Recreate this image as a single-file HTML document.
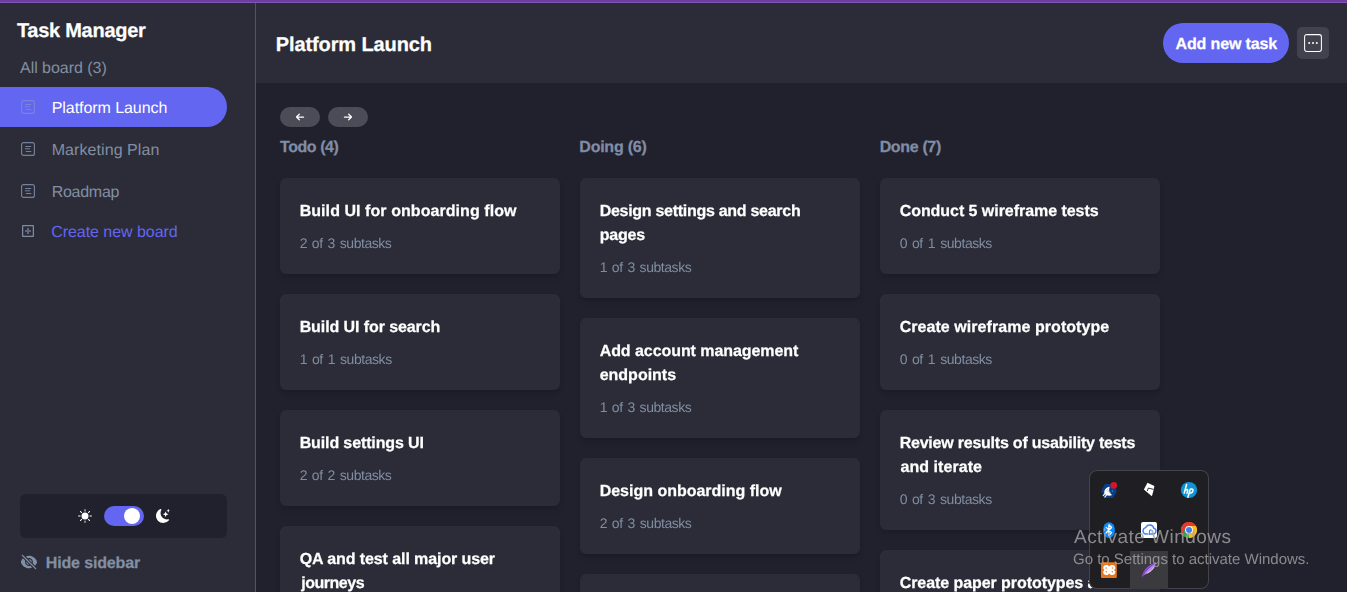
<!DOCTYPE html>
<html lang="en">
<head>
<meta charset="utf-8">
<title>Task Manager</title>
<style>
html,body{margin:0;padding:0;width:1347px;height:592px;overflow:hidden;background:#20212c}
#root{width:1347px;height:592px;overflow:hidden;position:relative;background:#20212c;font-family:"Liberation Sans",sans-serif}
.a{position:absolute}
.t{position:absolute;white-space:nowrap;line-height:1;text-rendering:geometricPrecision}
.card{position:absolute;width:280px;background:#2b2c37;border-radius:6px;box-shadow:0 4px 6px -1px rgba(0,0,0,.14),0 2px 4px -2px rgba(0,0,0,.14)}
.g{position:absolute;left:0;top:0;width:1347px;height:592px;will-change:transform}
svg{position:absolute;overflow:visible}
</style>
</head>
<body>
<div id="root">
<!-- top accent -->
<div class=a style="left:0;top:0;width:1347px;height:2px;background:#6b3fa0"></div>
<div class=a style="left:0;top:2px;width:1347px;height:1px;background:#8354b3"></div>
<!-- sidebar -->
<div class=a style="left:0;top:3px;width:255px;height:589px;background:#2b2c37"></div>
<div class=a style="left:255px;top:3px;width:1px;height:589px;background:#4b5567"></div>
<!-- header -->
<div class=a style="left:256px;top:3px;width:1091px;height:80px;background:#2b2c37"></div>
<!-- active pill -->
<div class=a style="left:0;top:87px;width:227px;height:40px;background:#6366f1;border-radius:0 20px 20px 0"></div>
<!-- theme box -->
<div class=a style="left:20px;top:494px;width:207px;height:44px;background:#20212c;border-radius:6px"></div>
<div class=a style="left:104px;top:506px;width:40px;height:20px;background:#6366f1;border-radius:10px"></div>
<div class=a style="left:124px;top:508px;width:16px;height:16px;background:#fff;border-radius:8px"></div>
<!-- add task button -->
<div class=a style="left:1163px;top:23px;width:126px;height:40px;background:#6366f1;border-radius:20px"></div>
<!-- dots button -->
<div class=a style="left:1297px;top:27px;width:32px;height:32px;background:#41424d;border-radius:5px"></div>
<!-- arrow buttons -->
<div class=a style="left:280px;top:107px;width:40px;height:20px;background:#4b4c57;border-radius:10px"></div>
<div class=a style="left:328px;top:107px;width:40px;height:20px;background:#4b4c57;border-radius:10px"></div>

<div class=card style="left:280px;top:178px;height:96px"></div>
<div class=card style="left:280px;top:294px;height:96px"></div>
<div class=card style="left:280px;top:410px;height:96px"></div>
<div class=card style="left:280px;top:526px;height:120px"></div>
<div class=card style="left:580px;top:178px;height:120px"></div>
<div class=card style="left:580px;top:318px;height:120px"></div>
<div class=card style="left:580px;top:458px;height:96px"></div>
<div class=card style="left:580px;top:574px;height:96px"></div>
<div class=card style="left:880px;top:178px;height:96px"></div>
<div class=card style="left:880px;top:294px;height:96px"></div>
<div class=card style="left:880px;top:410px;height:120px"></div>
<div class=card style="left:880px;top:550px;height:144px"></div>
<span class=t style="left:16.88px;top:21px;font-size:20px;font-weight:700;color:#ffffff;letter-spacing:-0.262px;word-spacing:0.000px;-webkit-text-stroke-width:.25px;">Task Manager</span>
<span class=t style="left:20.00px;top:61px;font-size:16px;font-weight:400;color:#828fa3;letter-spacing:-0.027px;word-spacing:0.000px;">All board (3)</span>
<span class=t style="left:51.70px;top:101px;font-size:16px;font-weight:400;color:#ffffff;letter-spacing:-0.057px;word-spacing:0.000px;">Platform Launch</span>
<span class=t style="left:51.70px;top:143px;font-size:16px;font-weight:400;color:#828fa3;letter-spacing:0.074px;word-spacing:0.000px;">Marketing Plan</span>
<span class=t style="left:51.70px;top:185px;font-size:16px;font-weight:400;color:#828fa3;letter-spacing:-0.267px;word-spacing:0.000px;">Roadmap</span>
<span class=t style="left:51.20px;top:225px;font-size:16px;font-weight:400;color:#6366f1;letter-spacing:-0.043px;word-spacing:0.000px;">Create new board</span>
<span class=t style="left:45.74px;top:556px;font-size:16px;font-weight:700;color:#828fa3;letter-spacing:-0.145px;word-spacing:0.000px;-webkit-text-stroke-width:.25px;">Hide sidebar</span>
<span class=t style="left:275.74px;top:35px;font-size:20px;font-weight:700;color:#ffffff;letter-spacing:-0.103px;word-spacing:0.000px;-webkit-text-stroke-width:.25px;">Platform Launch</span>
<span class=t style="left:1175.54px;top:37px;font-size:16px;font-weight:700;color:#ffffff;letter-spacing:-0.145px;word-spacing:0.000px;-webkit-text-stroke-width:.25px;">Add new task</span>
<span class=t style="left:280.00px;top:140px;font-size:16px;font-weight:700;color:#808da6;letter-spacing:-0.434px;word-spacing:0.000px;-webkit-text-stroke-width:.25px;">Todo (4)</span>
<span class=t style="left:579.32px;top:140px;font-size:16px;font-weight:700;color:#808da6;letter-spacing:-0.240px;word-spacing:0.000px;-webkit-text-stroke-width:.25px;">Doing (6)</span>
<span class=t style="left:879.66px;top:140px;font-size:16px;font-weight:700;color:#808da6;letter-spacing:-0.343px;word-spacing:0.000px;-webkit-text-stroke-width:.25px;">Done (7)</span>
<div class=g><span class=t style="left:299.66px;top:204px;font-size:16px;font-weight:700;color:#ffffff;letter-spacing:0.065px;word-spacing:0.000px;-webkit-text-stroke-width:.25px;">Build UI for onboarding flow</span>
<span class=t style="left:299.66px;top:236px;font-size:14px;font-weight:400;color:#808da1;letter-spacing:-0.450px;word-spacing:1.440px;">2 of 3 subtasks</span>
<span class=t style="left:299.66px;top:320px;font-size:16px;font-weight:700;color:#ffffff;letter-spacing:-0.089px;word-spacing:0.000px;-webkit-text-stroke-width:.25px;">Build UI for search</span>
<span class=t style="left:299.66px;top:352px;font-size:14px;font-weight:400;color:#808da1;letter-spacing:-0.450px;word-spacing:1.547px;">1 of 1 subtasks</span>
<span class=t style="left:299.66px;top:436px;font-size:16px;font-weight:700;color:#ffffff;letter-spacing:-0.120px;word-spacing:0.000px;-webkit-text-stroke-width:.25px;">Build settings UI</span>
<span class=t style="left:299.66px;top:468px;font-size:14px;font-weight:400;color:#808da1;letter-spacing:-0.450px;word-spacing:1.440px;">2 of 2 subtasks</span>
<span class=t style="left:299.66px;top:552px;font-size:16px;font-weight:700;color:#ffffff;letter-spacing:-0.090px;word-spacing:0.000px;-webkit-text-stroke-width:.25px;">QA and test all major user</span>
<span class=t style="left:301.26px;top:576px;font-size:16px;font-weight:700;color:#ffffff;letter-spacing:-0.480px;word-spacing:0.000px;-webkit-text-stroke-width:.25px;">journeys</span>
<span class=t style="left:599.66px;top:204px;font-size:16px;font-weight:700;color:#ffffff;letter-spacing:-0.282px;word-spacing:0.000px;-webkit-text-stroke-width:.25px;">Design settings and search</span>
<span class=t style="left:599.66px;top:228px;font-size:16px;font-weight:700;color:#ffffff;letter-spacing:-0.160px;word-spacing:0.000px;-webkit-text-stroke-width:.25px;">pages</span>
<span class=t style="left:599.66px;top:260px;font-size:14px;font-weight:400;color:#808da1;letter-spacing:-0.450px;word-spacing:1.387px;">1 of 3 subtasks</span>
<span class=t style="left:599.66px;top:344px;font-size:16px;font-weight:700;color:#ffffff;letter-spacing:-0.061px;word-spacing:0.000px;-webkit-text-stroke-width:.25px;">Add account management</span>
<span class=t style="left:599.66px;top:368px;font-size:16px;font-weight:700;color:#ffffff;letter-spacing:0.000px;word-spacing:0.000px;-webkit-text-stroke-width:.25px;">endpoints</span>
<span class=t style="left:599.66px;top:400px;font-size:14px;font-weight:400;color:#808da1;letter-spacing:-0.450px;word-spacing:1.387px;">1 of 3 subtasks</span>
<span class=t style="left:599.66px;top:484px;font-size:16px;font-weight:700;color:#ffffff;letter-spacing:-0.008px;word-spacing:0.000px;-webkit-text-stroke-width:.25px;">Design onboarding flow</span>
<span class=t style="left:599.66px;top:516px;font-size:14px;font-weight:400;color:#808da1;letter-spacing:-0.450px;word-spacing:1.440px;">2 of 3 subtasks</span>
<span class=t style="left:899.66px;top:204px;font-size:16px;font-weight:700;color:#ffffff;letter-spacing:-0.047px;word-spacing:0.000px;-webkit-text-stroke-width:.25px;">Conduct 5 wireframe tests</span>
<span class=t style="left:899.66px;top:236px;font-size:14px;font-weight:400;color:#808da1;letter-spacing:-0.450px;word-spacing:1.600px;">0 of 1 subtasks</span>
<span class=t style="left:899.66px;top:320px;font-size:16px;font-weight:700;color:#ffffff;letter-spacing:0.058px;word-spacing:0.000px;-webkit-text-stroke-width:.25px;">Create wireframe prototype</span>
<span class=t style="left:899.66px;top:352px;font-size:14px;font-weight:400;color:#808da1;letter-spacing:-0.450px;word-spacing:1.600px;">0 of 1 subtasks</span>
<span class=t style="left:899.66px;top:436px;font-size:16px;font-weight:700;color:#ffffff;letter-spacing:-0.220px;word-spacing:0.000px;-webkit-text-stroke-width:.25px;">Review results of usability tests</span>
<span class=t style="left:900.46px;top:460px;font-size:16px;font-weight:700;color:#ffffff;letter-spacing:0.064px;word-spacing:0.000px;-webkit-text-stroke-width:.25px;">and iterate</span>
<span class=t style="left:899.66px;top:492px;font-size:14px;font-weight:400;color:#808da1;letter-spacing:-0.450px;word-spacing:1.547px;">0 of 3 subtasks</span>
<span class=t style="left:899.66px;top:576px;font-size:16px;font-weight:700;color:#ffffff;letter-spacing:-0.065px;word-spacing:0.000px;-webkit-text-stroke-width:.25px;">Create paper prototypes</span>
<span class=t style="left:1087.40px;top:576px;font-size:16px;font-weight:700;color:#ffffff;letter-spacing:0.050px;word-spacing:0.000px;-webkit-text-stroke-width:.25px;">and</span></div>
<!-- board icons -->
<svg style="left:21px;top:100px" width="14" height="14" viewBox="0 0 14 14" fill="none" stroke="#7d81dc" stroke-width="1.150"><rect x=".6" y=".6" width="12.8" height="12.8" rx="2"/><path d="M4.2 4.5h6M3.8 6.800h5.3M4.8 9.5h5.5" stroke-width="1"/></svg>
<svg style="left:21px;top:142px" width="14" height="14" viewBox="0 0 14 14" fill="none" stroke="#75819a" stroke-width="1.150"><rect x=".6" y=".6" width="12.8" height="12.8" rx="2"/><path d="M4.2 4.5h6M3.8 6.800h5.3M4.8 9.5h5.5" stroke-width="1"/></svg>
<svg style="left:21px;top:184px" width="14" height="14" viewBox="0 0 14 14" fill="none" stroke="#75819a" stroke-width="1.150"><rect x=".6" y=".6" width="12.8" height="12.8" rx="2"/><path d="M4.2 4.5h6M3.8 6.800h5.3M4.8 9.5h5.5" stroke-width="1"/></svg>
<!-- plus icon -->
<svg style="left:22px;top:225px" width="12" height="12" viewBox="0 0 12 12" fill="none" stroke="#7f8ba2" stroke-width="1.250"><rect x=".625" y=".625" width="10.750" height="10.750" rx=".5"/><path d="M6 3v6M3 6h6" stroke="#5d667a" stroke-width="2.100"/></svg>
<!-- sun -->
<svg style="left:78px;top:509px" width="14" height="14" viewBox="0 0 16 16" fill="#fff"><path d="M12 8a4 4 0 1 1-8 0 4 4 0 0 1 8 0zM8 0a.5.5 0 0 1 .5.5v2a.5.5 0 0 1-1 0v-2A.5.5 0 0 1 8 0zm0 13a.5.5 0 0 1 .5.5v2a.5.5 0 0 1-1 0v-2A.5.5 0 0 1 8 13zm8-5a.5.5 0 0 1-.5.5h-2a.5.5 0 0 1 0-1h2a.5.5 0 0 1 .5.5zM3 8a.5.5 0 0 1-.5.5h-2a.5.5 0 0 1 0-1h2A.5.5 0 0 1 3 8zm10.657-5.657a.5.5 0 0 1 0 .707l-1.414 1.415a.5.5 0 1 1-.707-.708l1.414-1.414a.5.5 0 0 1 .707 0zm-9.193 9.193a.5.5 0 0 1 0 .707L3.05 13.657a.5.5 0 0 1-.707-.707l1.414-1.414a.5.5 0 0 1 .707 0zm9.193 2.121a.5.5 0 0 1-.707 0l-1.414-1.414a.5.5 0 0 1 .707-.707l1.414 1.414a.5.5 0 0 1 0 .707zM4.464 4.465a.5.5 0 0 1-.707 0L2.343 3.05a.5.5 0 1 1 .707-.707l1.414 1.414a.5.5 0 0 1 0 .708z"/></svg>
<!-- moon -->
<svg style="left:156px;top:509px" width="14" height="14" viewBox="0 0 16 16" fill="#fff"><path d="M6 .278a.768.768 0 0 1 .08.858 7.208 7.208 0 0 0-.878 3.46c0 4.021 3.278 7.277 7.318 7.277.527 0 1.04-.055 1.533-.16a.787.787 0 0 1 .81.316.733.733 0 0 1-.031.893A8.349 8.349 0 0 1 8.344 16C3.734 16 0 12.286 0 7.71 0 4.266 2.114 1.312 5.124.06A.752.752 0 0 1 6 .278z"/><path d="M10.794 3.148a.217.217 0 0 1 .412 0l.387 1.162c.173.518.579.924 1.097 1.097l1.162.387a.217.217 0 0 1 0 .412l-1.162.387a1.734 1.734 0 0 0-1.097 1.097l-.387 1.162a.217.217 0 0 1-.412 0l-.387-1.162A1.734 1.734 0 0 0 9.31 6.593l-1.162-.387a.217.217 0 0 1 0-.412l1.162-.387a1.734 1.734 0 0 0 1.097-1.097l.387-1.162zM13.863.099a.145.145 0 0 1 .274 0l.258.774c.115.346.386.617.732.732l.774.258a.145.145 0 0 1 0 .274l-.774.258a1.156 1.156 0 0 0-.732.732l-.258.774a.145.145 0 0 1-.274 0l-.258-.774a1.156 1.156 0 0 0-.732-.732l-.774-.258a.145.145 0 0 1 0-.274l.774-.258c.346-.115.617-.386.732-.732L13.863.1z"/></svg>
<!-- eye slash -->
<svg style="left:20px;top:553px" width="18" height="18" viewBox="0 0 24 24" fill="#828fa3"><path d="M3.53 2.47a.75.75 0 0 0-1.06 1.06l18 18a.75.75 0 1 0 1.06-1.06l-18-18ZM22.676 12.553a11.249 11.249 0 0 1-2.631 4.31l-3.099-3.099a5.25 5.25 0 0 0-6.71-6.71L7.759 4.577a11.217 11.217 0 0 1 4.242-.827c4.97 0 9.185 3.223 10.675 7.69.12.362.12.752 0 1.113Z"/><path d="M15.75 12c0 .18-.013.357-.037.53l-4.244-4.243A3.75 3.75 0 0 1 15.75 12ZM12.53 15.713l-4.243-4.244a3.75 3.75 0 0 0 4.244 4.243Z"/><path d="M6.75 12c0-.619.107-1.213.304-1.764l-3.1-3.1a11.25 11.25 0 0 0-2.63 4.31c-.12.362-.12.752 0 1.114 1.489 4.467 5.704 7.69 10.675 7.69 1.5 0 2.933-.294 4.242-.827l-2.477-2.477A5.25 5.25 0 0 1 6.75 12Z"/></svg>
<!-- arrows -->
<svg style="left:295px;top:112px" width="10" height="10" viewBox="0 0 10 10" fill="none" stroke="#fff" stroke-width="1.25" stroke-linecap="round" stroke-linejoin="round"><path d="M8.6 5H1.700M4.300 2.200L1.500 5l2.800 2.800"/></svg>
<svg style="left:343px;top:112px" width="10" height="10" viewBox="0 0 10 10" fill="none" stroke="#fff" stroke-width="1.25" stroke-linecap="round" stroke-linejoin="round"><path d="M1.400 5h6.900M5.700 2.200L8.500 5 5.700 7.800"/></svg>
<!-- dots icon -->
<svg style="left:1304px;top:34px" width="18" height="18" viewBox="0 0 18 18" fill="none"><rect x=".6" y=".6" width="16.8" height="16.8" rx="2.2" stroke="#fff" stroke-width="1.050"/><circle cx="5.2" cy="9" r="1" fill="#fff"/><circle cx="9" cy="9" r="1" fill="#fff"/><circle cx="12.8" cy="9" r="1" fill="#fff"/></svg>

<!-- system tray flyout -->
<div class=a style="left:1089.3px;top:470.4px;width:119.600px;height:119.100px;background:#1f1f23;border-radius:8px;box-shadow:0 0 0 1px #434349 inset;overflow:hidden">
<div class=a style="left:40.700px;top:80.600px;width:38px;height:38px;background:#3b3b3f"></div>
</div>
<svg style="left:1089px;top:470px" width="120" height="120" viewBox="1089 470 120 120">
<!-- mysql workbench -->
<polygon points="1105,484 1113,484 1117,491 1113,498 1105,498 1101,491" fill="#0b3e86"/>
<path d="M1109.800 486.800c-4 .4-6.200 3.600-5.300 7 2.200 2.200 5.300 2.500 7.700 1.200-2.800-1.700-3.900-4.700-2.400-8.200z" fill="#fff"/>
<path d="M1105.200 493.400l-2 2.300M1106.700 494.600l-1.900 2.500" stroke="#fff" stroke-width="1.100" stroke-linecap="round"/>
<path d="M1106.200 490.300c1.400 1.300 3 2.300 4.800 2.900M1106.900 488.700c1 1.900 2.300 3.300 4 4.500" stroke="#9fb6d6" stroke-width=".45" fill="none"/>
<path d="M1112.200 490.300l.9.300-.5 1.500-.9-.600z" fill="#1fa3ea"/>
<circle cx="1113.800" cy="485.400" r="3.300" fill="#d3152e"/>
<!-- roblox-like -->
<path d="M1147.500 482.800l6.900 3.300-1 4.700-1.500 5.500-3.600-3-4.400-3.900z" fill="#fff"/>
<path d="M1153.600 489.400l-5.300-1.300-1 2.900" stroke="#1f1f23" stroke-width=".9" fill="none"/>
<!-- hp -->
<circle cx="1189" cy="490" r="8.100" fill="#0c96d8"/>
<path d="M1186.600 484.500l-2.400 8.600M1185.300 490.400c1.300-1.500 2.800-1.200 2.400.3l-.7 2.500M1190.400 488.900l-2.500 8.300M1190.200 489.700c1.700-1.300 3.300-.400 2.700 1.400-.600 1.800-2.300 2.500-3.600 1.400" stroke="#fff" stroke-width="1.500" fill="none" stroke-linecap="round"/>
<!-- bluetooth -->
<rect x="1103.200" y="522.200" width="11.600" height="15.900" rx="5.800" ry="6.800" fill="#0f8afa"/>
<path d="M1106.200 527.400l5.400 5.200-2.700 2.800v-10.600l2.700 2.700-5.400 5.300" stroke="#fff" stroke-width="1.300" fill="none" stroke-linejoin="round" stroke-linecap="round"/>
<circle cx="1104.500" cy="529" r=".55" fill="#bfe0ff"/>
<!-- cloud -->
<rect x="1141" y="522" width="16" height="16" rx="2" fill="#fff"/>
<path d="M1145.300 534h2.600M1150.600 534h2.400a2.900 2.900 0 0 0 .8-5.700 4.200 4.200 0 0 0-8-.7 3.300 3.300 0 0 0-.5 6.400" stroke="#3d84f5" stroke-width="1.450" fill="none" stroke-linejoin="round" stroke-linecap="round"/>
<path d="M1149.500 534.400v-3.300a1.300 1.300 0 0 1 1.500-1.200" stroke="#3d84f5" stroke-width="1.200" fill="none" stroke-linecap="round"/>
<!-- chrome -->
<circle cx="1189" cy="530" r="8" fill="#e33b2e"/>
<path d="M1189 530l-6.930 4a8 8 0 0 0 6.930 4l4-6.900z" fill="#2ea44f"/>
<path d="M1189 538a8 8 0 0 0 6.930-12h-8z" fill="#fbc116"/>
<path d="M1189 530l-6.930 4a8 8 0 0 1 0-8z" fill="#2ea44f"/>
<path d="M1182.070 534a8 8 0 0 1 0-8l3.500 2z" fill="#e33b2e"/>
<path d="M1182.070 526a8 8 0 0 1 13.860 0z" fill="#e33b2e"/>
<circle cx="1189" cy="530" r="3.900" fill="#fff"/>
<circle cx="1189" cy="530" r="3" fill="#3f7df0"/>
<!-- xampp -->
<rect x="1101" y="562.200" width="15.800" height="15.800" rx="1" fill="#ea761c"/>
<rect x="1103.200" y="565" width="12.100" height="10" rx="3.200" fill="#fff"/>
<g fill="#ea761c"><circle cx="1109.250" cy="564.900" r="1.250"/><circle cx="1109.250" cy="575.100" r="1.250"/><circle cx="1103" cy="570" r="1.200"/><circle cx="1115.500" cy="570" r="1.200"/>
<circle cx="1106.100" cy="568.100" r=".75"/><circle cx="1106.300" cy="571.700" r=".75"/><circle cx="1112.500" cy="568.100" r=".75"/><circle cx="1112.300" cy="571.700" r=".75"/></g>
<!-- feather -->
<path d="M1156.100 562.300c-7.300 2.500-12.900 8-14.100 15.100 1.300-1.900 2.900-3 5-3.900 4.600-2 8-5.600 9.100-11.200z" fill="#b68ae6"/>
<path d="M1156.100 562.300c-7.300 2.500-12.900 8-14.100 15.100 2.400-5.600 7.200-10.700 14.100-15.100z" fill="#8e44d6"/>
<path d="M1155.700 562.900c-5.800 3.500-10.400 8-13.500 14" stroke="#6d2bb8" stroke-width=".7" fill="none"/>
<path d="M1147.500 573c2.600-1.300 4.900-3.100 6.400-5.600" stroke="#e6d4fa" stroke-width=".9" fill="none" stroke-linecap="round"/>
</svg>
<span class=t style="left:1073.92px;top:528px;font-size:19px;font-weight:400;color:rgba(165,165,167,.8);letter-spacing:0.469px;word-spacing:0.000px;will-change:transform;">Activate Windows</span>
<span class=t style="left:1073.24px;top:552px;font-size:15px;font-weight:400;color:rgba(165,165,167,.8);letter-spacing:-0.009px;word-spacing:0.000px;will-change:transform;">Go to Settings to activate Windows.</span>
</div>
</body>
</html>
